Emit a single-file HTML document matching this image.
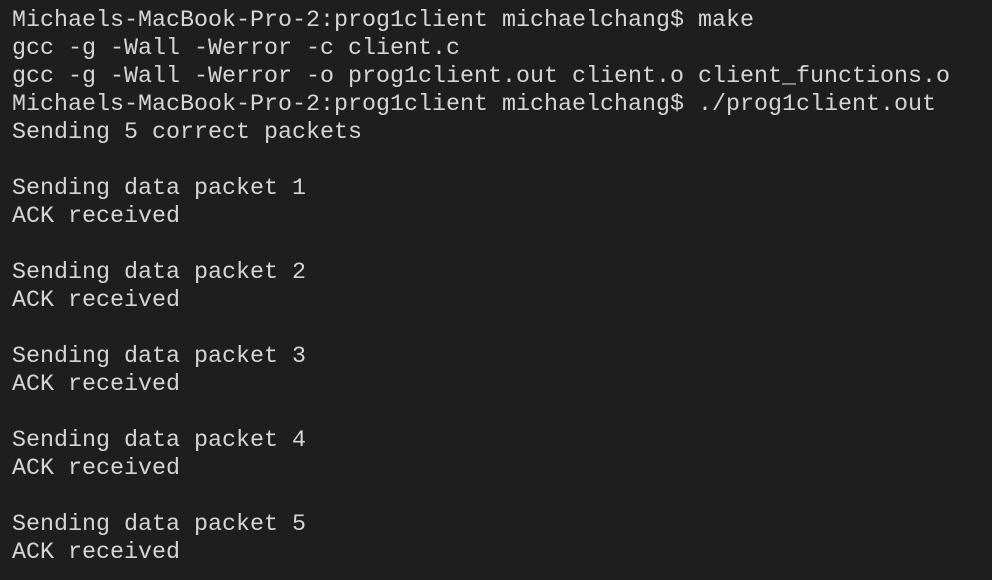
<!DOCTYPE html>
<html><head><style>
html,body{margin:0;padding:0;background:#1e1e1e;width:992px;height:580px;overflow:hidden}
pre{margin:0;padding:7px 0 0 12px;font-family:"Liberation Mono",monospace;font-size:23.33px;line-height:28px;color:#d6d6d6;white-space:pre}
</style></head><body><pre>Michaels-MacBook-Pro-2:prog1client michaelchang$ make
gcc -g -Wall -Werror -c client.c
gcc -g -Wall -Werror -o prog1client.out client.o client_functions.o
Michaels-MacBook-Pro-2:prog1client michaelchang$ ./prog1client.out
Sending 5 correct packets

Sending data packet 1
ACK received

Sending data packet 2
ACK received

Sending data packet 3
ACK received

Sending data packet 4
ACK received

Sending data packet 5
ACK received</pre></body></html>
